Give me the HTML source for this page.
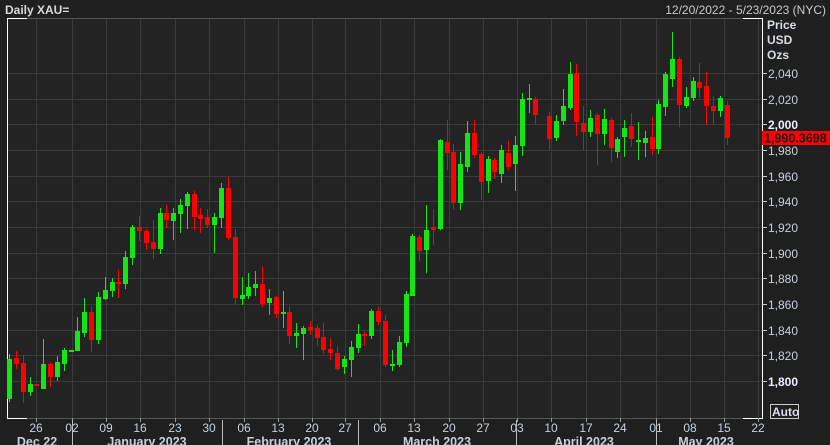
<!DOCTYPE html>
<html><head><meta charset="utf-8"><style>
html,body{margin:0;padding:0;background:#1f1f1f;width:830px;height:445px;overflow:hidden;font-family:"Liberation Sans",sans-serif}
svg{display:block}
</style></head><body>
<svg id="s" width="830" height="445" xmlns="http://www.w3.org/2000/svg" font-family="Liberation Sans, sans-serif">
<rect x="0" y="0" width="830" height="445" fill="#1f1f1f"/>
<rect x="7" y="18" width="755" height="400" fill="#232323"/>
<text x="5" y="14" fill="#d8d8d8" font-size="12" font-weight="bold">Daily XAU=</text>
<text x="826" y="14" fill="#c8c8c8" font-size="12" text-anchor="end">12/20/2022 - 5/23/2023 (NYC)</text>
<g id="grid" stroke="#3a3a3a" stroke-width="1"></g>
<line x1="7" y1="18.5" x2="762" y2="18.5" stroke="#555"/>
<line x1="7" y1="418.5" x2="762" y2="418.5" stroke="#555"/>
<path d="M7.5 18V418.5H27M7 18.5H27M743 18.5H762.5V418.5H743" stroke="#fff" fill="none"/>
<g id="c"></g>
<g id="ax" fill="#c8d0d8" font-size="12"></g>
<text x="767" y="29" fill="#d8dde2" font-size="12" font-weight="bold">Price</text>
<text x="767" y="44" fill="#d8dde2" font-size="12" font-weight="bold">USD</text>
<text x="767" y="59" fill="#d8dde2" font-size="12" font-weight="bold">Ozs</text>
<rect x="762" y="131" width="68" height="14" fill="#f00"/>
<text x="764" y="142.5" fill="#1a1a1a" font-size="12.5" font-weight="bold">1,990.3698</text>
<rect x="770.5" y="404.5" width="28" height="14" fill="none" stroke="#ccc"/>
<text x="772" y="416" fill="#dde" font-size="12" font-weight="bold">Auto</text>
</svg>
<script>
var NS="http://www.w3.org/2000/svg";
function el(p,t,a,tx){var e=document.createElementNS(NS,t);for(var k in a)e.setAttribute(k,a[k]);if(tx)e.textContent=tx;document.getElementById(p).appendChild(e);return e;}
var vx=[36,72,106,140,175,209,244,278,312,345,380,414,449,483,517,551,586,620,656,690,724,758];
var lb=["26","02","09","16","23","30","06","13","20","27","06","13","20","27","03","10","17","24","01","08","15","22"];
vx.forEach(function(x,i){el("grid","line",{x1:x+.5,y1:18,x2:x+.5,y2:418});
el("ax","line",{x1:x+.5,y1:418,x2:x+.5,y2:422,stroke:"#999"});
el("ax","text",{x:x,y:432,"text-anchor":"middle"},lb[i]);});
for(var p=1800;p<=2040;p+=20){var y=381-(p-1800)*1.2833;y=Math.round(y)+.5;
el("grid","line",{x1:7,y1:y,x2:762,y2:y});
el("ax","line",{x1:762,y1:y,x2:767,y2:y,stroke:"#ccc"});
if(p!=1980||true){var s=(p/1000|0)+","+String(p%1000).padStart(3,"0");
var t=el("ax","text",{x:768,y:y+4.5},s);if(p==1800||p==2000){t.setAttribute("font-weight","bold");t.setAttribute("fill","#eef");}}}
[[72,""],[222,""],[358,""],[516,""],[656,""]].forEach(function(a){el("ax","line",{x1:a[0]+.5,y1:420,x2:a[0]+.5,y2:445,stroke:"#bbb"});});
[["Dec 22",37],["January 2023",147],["February 2023",289],["March 2023",437],["April 2023",584],["May 2023",706]].forEach(function(a){
el("ax","text",{x:a[1],y:446,"text-anchor":"middle","font-weight":"bold","font-size":"12.5"},a[0]);});
var G="#14e614",R="#ff0000";
var d=[
[9,359,399,354,402,G],[16,358,364,351,369,R],[23,363,392,355,403,R],[30,384,392,377,396,G],[36,384,386,384,386,R],
[43,364,389,339,389,G],[50,364,377,362,387,R],[57,362,377,356,381,G],[64,350,364,348,371,G],[71,350,352,350,352,G],
[77,331,351,317,351,G],[84,312,333,298,337,G],[91,312,340,306,352,R],[98,297,340,292,344,G],[105,290,299,277,300,G],
[112,282,291,278,297,G],[118,282,284,270,298,R],[125,257,284,251,289,G],[132,227,258,225,265,G],[139,227,231,216,241,R],
[146,231,243,229,250,R],[153,242,249,220,259,R],[160,213,249,208,254,G],[166,213,220,205,228,R],[173,213,221,208,240,G],
[180,205,214,199,233,G],[187,194,206,192,229,G],[194,194,217,191,230,R],[200,215,219,208,233,R],[207,217,225,209,228,R],
[214,217,225,213,253,G],[221,188,218,183,228,G],[228,188,238,177,240,R],[235,237,298,229,304,R],[242,295,299,277,305,G],
[248,287,296,273,299,G],[255,284,288,271,296,G],[262,284,304,266,307,R],[269,298,303,289,315,G],[276,297,314,296,318,R],
[283,312,314,291,328,G],[289,312,336,306,344,R],[296,333,336,323,348,G],[303,328,334,326,360,G],[310,327,330,321,335,R],
[317,328,338,325,346,R],[323,337,350,323,354,R],[330,349,353,338,360,R],[337,353,369,346,371,R],[344,359,367,356,374,G],
[351,347,360,341,377,G],[358,334,348,324,353,G],[364,334,336,332,346,R],[371,311,336,309,339,G],[378,311,322,307,325,R],
[385,321,365,315,367,R],[392,364,365,350,371,G],[399,342,365,336,367,G],[406,294,343,291,347,G],[412,236,296,234,296,G],
[419,237,251,235,261,R],[426,230,250,205,273,G],[433,227,230,209,245,R],[440,140,229,139,230,G],[447,142,153,120,170,R],
[453,152,203,144,209,R],[460,164,203,152,210,G],[467,133,167,121,172,G],[474,133,155,120,158,R],[481,154,182,152,200,R],
[488,159,181,156,193,G],[494,160,172,158,179,R],[501,150,174,145,183,G],[508,153,167,141,170,R],[515,145,164,136,191,G],
[522,99,146,93,156,G],[529,98,100,84,113,G],[535,99,115,97,125,R],[549,116,139,112,150,R],[556,121,138,115,141,G],
[563,106,121,89,125,G],[570,74,108,62,110,G],[576,73,122,64,136,R],[583,123,132,106,150,R],[590,118,132,110,137,G],
[597,115,134,113,165,R],[604,119,134,109,145,G],[611,120,148,118,162,R],[617,139,152,137,158,G],[624,128,137,120,157,G],
[631,126,139,113,147,R],[638,140,142,122,160,G],[645,138,143,131,157,G],[652,137,149,117,155,R],[658,104,149,100,154,G],
[665,74,107,72,116,G],[672,59,79,32,87,G],[679,59,105,57,127,R],[686,97,106,87,108,G],[693,81,98,77,101,G],
[699,82,88,63,98,R],[706,86,106,72,125,R],[713,106,111,96,125,R],[720,98,111,96,117,G],[727,105,138,101,145,R]];
d.forEach(function(c){var x=c[0];
el("c","rect",{x:x,y:c[3],width:1,height:Math.max(1,c[4]-c[3]),fill:c[5]});
el("c","rect",{x:x-2,y:c[1],width:5,height:Math.max(2,c[2]-c[1]),fill:c[5]});});
</script>
</body></html>
